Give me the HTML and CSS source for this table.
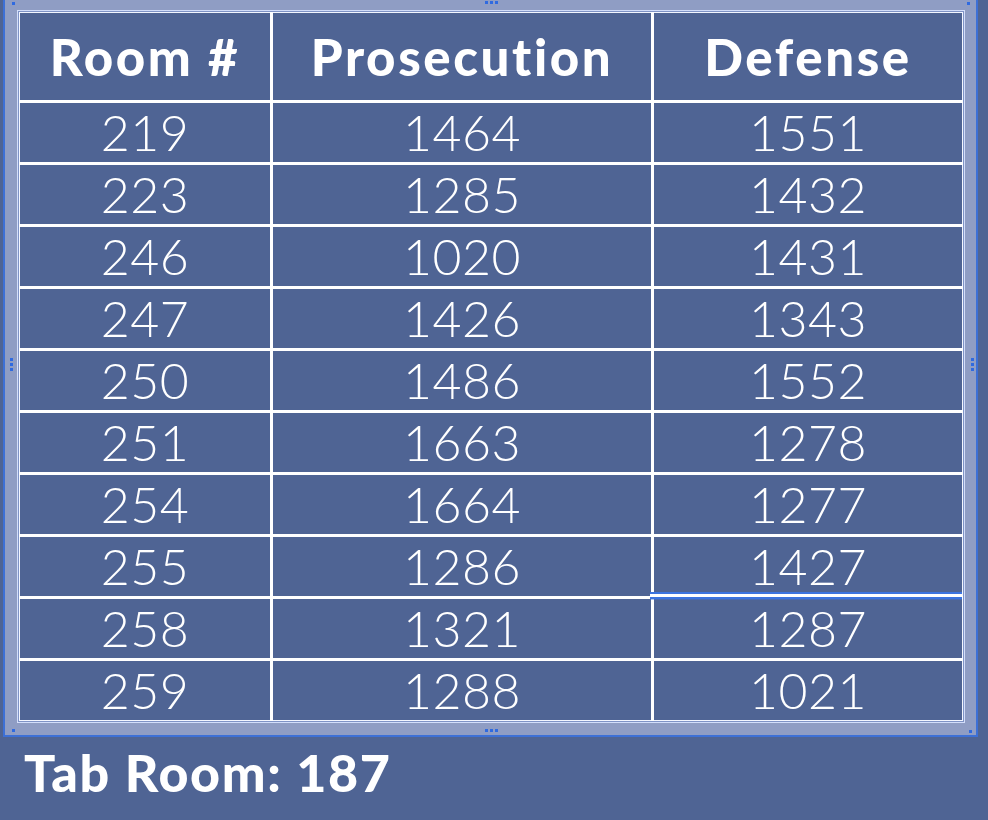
FILE: index.html
```html
<!DOCTYPE html>
<html>
<head>
<meta charset="utf-8">
<link rel="stylesheet" href="styles.css">
</head>
<body>
<div class="frame">
  <span class="handle h-tl"></span>
  <span class="handle h-tr"></span>
  <span class="handle h-bl"></span>
  <span class="handle h-br"></span>
  <span class="dots dots-top"><i></i><i></i><i></i></span>
  <span class="dots dots-bottom"><i></i><i></i><i></i></span>
  <span class="dots dots-left v"><i></i><i></i><i></i></span>
  <span class="dots dots-right v"><i></i><i></i><i></i></span>
  <div class="table-wrap">
    <table class="rooms">
      <colgroup>
        <col class="c1"><col class="c2"><col class="c3">
      </colgroup>
      <thead>
        <tr><th>Room #</th><th>Prosecution</th><th>Defense</th></tr>
      </thead>
      <tbody>
        <tr><td>219</td><td>1464</td><td>1551</td></tr>
        <tr><td>223</td><td>1285</td><td>1432</td></tr>
        <tr><td>246</td><td>1020</td><td>1431</td></tr>
        <tr><td>247</td><td>1426</td><td>1343</td></tr>
        <tr><td>250</td><td>1486</td><td>1552</td></tr>
        <tr><td>251</td><td>1663</td><td>1278</td></tr>
        <tr><td>254</td><td>1664</td><td>1277</td></tr>
        <tr><td>255</td><td>1286</td><td class="sel">1427</td></tr>
        <tr><td>258</td><td>1321</td><td>1287</td></tr>
        <tr><td>259</td><td>1288</td><td>1021</td></tr>
      </tbody>
    </table>
  </div>
</div>
<p class="tab-room">Tab Room: 187</p>
</body>
</html>
```

FILE: styles.css
```css
html, body {
  margin: 0;
  padding: 0;
}
body {
  background: #4f6494;
  width: 988px;
  height: 820px;
  overflow: hidden;
  font-family: "Lato", "Open Sans", "DejaVu Sans", sans-serif;
  color: #ffffff;
}
.frame {
  position: relative;
  margin-left: 3px;
  padding: 10px 11px 12px 12px;
  box-sizing: border-box;
  width: 975px;
  background: #8f9dc4;
  border: 2px solid #3d70d6;
  border-top: none;
}
.table-wrap {
  border: 1px solid #d3defa;
  padding: 1px;
  background: #7f93c6;
}
.rooms {
  width: 100%;
  border-collapse: collapse;
  background: #4f6494;
  table-layout: fixed;
  border: 1px solid #f3f6ff;
}
.c1 { width: 252px; }
.c2 { width: 381px; }
.rooms th,
.rooms td {
  border: 3px solid #ffffff;
  text-align: center;
  padding: 0;
  color: #ffffff;
}
.rooms tr:first-child th { border-top: none; }
.rooms tr > :first-child { border-left: none; }
.rooms tr > :last-child { border-right: none; }
.rooms tbody tr:last-child td { border-bottom: none; }
.rooms th {
  height: 87px;
  font-size: 51px;
  font-weight: 900;
  letter-spacing: 2.6px;
}
.rooms td {
  height: 59px;
  font-size: 50px;
  font-weight: 300;
  line-height: 59px;
  letter-spacing: 0.5px;
}
.rooms td.sel {
  position: relative;
  z-index: 1;
}
.rooms td.sel::after {
  content: "";
  position: absolute;
  z-index: 2;
  left: -4px;
  right: 0;
  bottom: -4px;
  height: 8px;
  background: linear-gradient(#3c74e0 0, #3c74e0 2px, #ffffff 2px, #ffffff 5px, #3c74e0 5px, #3c74e0 7px, rgba(60,116,224,0.4) 7px, rgba(60,116,224,0.4) 8px);
}
.handle {
  position: absolute;
  width: 3px;
  height: 3px;
  background: #2f6ae0;
}
.h-tl { left: 7px; top: 2px; }
.h-tr { right: 6px; top: 2px; }
.h-bl { left: 7px; bottom: 3px; }
.h-br { right: 4px; bottom: 2px; }
.dots {
  position: absolute;
  display: flex;
  gap: 2px;
}
.dots i {
  display: block;
  width: 3px;
  height: 3px;
  background: #2f6ae0;
}
.dots.v { flex-direction: column; }
.dots-top { left: 480px; top: 1px; }
.dots-bottom { left: 480px; bottom: 3px; }
.dots-left { left: 5px; top: 358px; }
.dots-right { right: 2px; top: 358px; }
.tab-room {
  margin: 3px 0 0 24px;
  font-size: 52px;
  font-weight: 900;
  letter-spacing: 1.6px;
  line-height: 64px;
}
```
